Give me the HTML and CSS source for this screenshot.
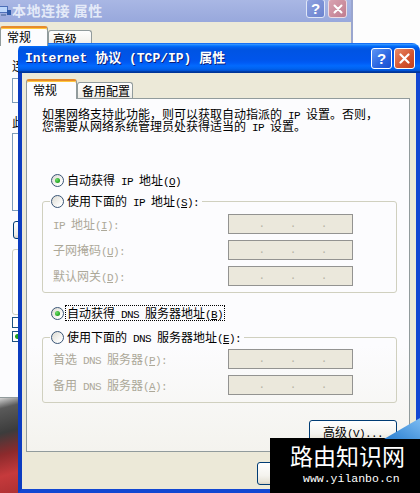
FILE: index.html
```html
<!DOCTYPE html>
<html lang="zh-CN">
<head>
<meta charset="utf-8">
<title>Internet 协议 (TCP/IP) 属性</title>
<link rel="stylesheet" href="styles.css">
</head>
<body>
<div class="wallpaper"></div>

<div class="bgwin">
  <div class="bg-title">
    <svg class="bg-icon" width="14" height="14" viewBox="0 0 14 14"><rect x="1" y="2" width="9" height="7" fill="#4d6fb8"/><rect x="2" y="3" width="7" height="5" fill="#bcd6fb"/><rect x="3" y="10" width="5" height="2" fill="#6f86b8"/><rect x="9" y="6" width="4" height="5" fill="#2e5aa8"/></svg>
    <span class="bg-title-text">本地连接 属性</span>
    <div class="bg-btns">
      <span class="tb-btn help inactive">?</span>
      <span class="tb-btn close inactive"><svg width="10" height="10" viewBox="0 0 10 10"><path d="M1.5 1.5 L8.5 8.5 M8.5 1.5 L1.5 8.5" stroke="#fff" stroke-width="2" stroke-linecap="round"/></svg></span>
    </div>
  </div>
  <div class="bg-body">
    <div class="tabs bg-tabs">
      <div class="tab active bg-tab-a">常规</div>
      <div class="tab bg-tab-b">高级</div>
    </div>
    <div class="bg-panel">
      <div class="bg-label">连接时使用:</div>
      <div class="bg-box bg-box-1"></div>
      <div class="bg-label bg-label-2">此连接使用下列项目(O):</div>
      <div class="bg-box bg-box-2"></div>
      <div class="bg-btn">安装(N)...</div>
      <div class="bg-box bg-box-3"></div>
      <div class="bg-check"></div>
      <div class="bg-check checked"></div>
    </div>
  </div>
</div>

<div class="win">
  <div class="titlebar">
    <span class="title-text">Internet 协议 (TCP/IP) 属性</span>
    <div class="tb-btns">
      <span class="tb-btn help">?</span>
      <span class="tb-btn close"><svg width="11" height="11" viewBox="0 0 11 11"><path d="M1.5 1.5 L9.5 9.5 M9.5 1.5 L1.5 9.5" stroke="#fff" stroke-width="2.2" stroke-linecap="round"/></svg></span>
    </div>
  </div>
  <div class="win-body">
    <div class="tabs">
      <div class="tab active tab-general">常规</div>
      <div class="tab tab-alt">备用配置</div>
    </div>
    <div class="panel">
      <p class="intro">如果网络支持此功能，则可以获取自动指派的<span class="l"> IP </span>设置。否则，<br>您需要从网络系统管理员处获得适当的<span class="l"> IP </span>设置。</p>

      <div class="radio-row r-auto-ip"><span class="radio checked"></span><span class="rtext">自动获得<span class="l"> IP </span>地址<span class="l">(<u>O</u>)</span></span></div>

      <fieldset class="group g-ip">
        <legend><span class="radio-row"><span class="radio"></span><span class="rtext">使用下面的<span class="l"> IP </span>地址<span class="l">(<u>S</u>):</span></span></span></legend>
        <div class="field-row"><span class="flabel"><span class="l">IP </span>地址<span class="l">(<u>I</u>):</span></span><span class="ipbox"><span>.</span><span>.</span><span>.</span></span></div>
        <div class="field-row"><span class="flabel">子网掩码<span class="l">(<u>U</u>):</span></span><span class="ipbox"><span>.</span><span>.</span><span>.</span></span></div>
        <div class="field-row"><span class="flabel">默认网关<span class="l">(<u>D</u>):</span></span><span class="ipbox"><span>.</span><span>.</span><span>.</span></span></div>
      </fieldset>

      <div class="radio-row r-auto-dns"><span class="radio checked"></span><span class="rtext focus">自动获得<span class="l"> DNS </span>服务器地址<span class="l">(<u>B</u>)</span></span></div>

      <fieldset class="group g-dns">
        <legend><span class="radio-row"><span class="radio"></span><span class="rtext">使用下面的<span class="l"> DNS </span>服务器地址<span class="l">(<u>E</u>):</span></span></span></legend>
        <div class="field-row"><span class="flabel">首选<span class="l"> DNS </span>服务器<span class="l">(<u>P</u>):</span></span><span class="ipbox"><span>.</span><span>.</span><span>.</span></span></div>
        <div class="field-row"><span class="flabel">备用<span class="l"> DNS </span>服务器<span class="l">(<u>A</u>):</span></span><span class="ipbox"><span>.</span><span>.</span><span>.</span></span></div>
      </fieldset>

      <div class="adv-row"><button class="xpbtn adv">高级<span class="l">(<u>V</u>)...</span></button></div>
    </div>
    <div class="btn-row">
      <button class="xpbtn ok">确定</button>
      <button class="xpbtn cancel">取消</button>
    </div>
  </div>
</div>

<div class="watermark">
  <svg class="wm-corner" width="36" height="21" viewBox="0 0 36 21"><defs><linearGradient id="wg" x1="0" y1="1" x2="1" y2="0"><stop offset="0" stop-color="#2a7fd0"/><stop offset="1" stop-color="#7dbcf2"/></linearGradient></defs><polygon points="0,21 36,0 36,21" fill="url(#wg)"/></svg>
  <div class="wm-title">路由知识网</div>
  <div class="wm-url">www.yilanbo.cn</div>
</div>
</body>
</html>
```

FILE: styles.css
```css
* { box-sizing: border-box; }
html, body { margin: 0; padding: 0; }
body {
  width: 420px;
  height: 493px;
  overflow: hidden;
  position: relative;
  background: #fdfdfd;
  font-family: "Noto Sans CJK SC", sans-serif;
  font-size: 12px;
  line-height: 14px;
  color: #000;
}
.l {
  font-family: "Liberation Mono", monospace;
  font-size: 11px;
  letter-spacing: -0.6px;
  line-height: 0;
}
u { text-decoration: underline; text-underline-offset: 1px; }

/* desktop */
.wallpaper {
  position: absolute;
  left: 0;
  top: 396px;
  width: 40px;
  height: 97px;
  background: linear-gradient(165deg, #e8e8e8 0, #5a5a5a 12%, #3c3c3c 35%, #8c2a2c 55%, #c63a3c 75%, #a82e30 100%);
}

/* background window */
.bgwin {
  position: absolute;
  left: -6px;
  top: 0;
  width: 359px;
  height: 398px;
  background: #ece9d8;
  border-right: 2px solid #9aa6cf;
  display: flex;
  flex-direction: column;
}
.bg-title {
  height: 22px;
  flex: none;
  background: linear-gradient(#a9b7e4, #98a8dc);
  display: flex;
  align-items: flex-start;
  padding: 0 4px 0 4px;
}
.bg-icon { margin-top: 4px; }
.bg-title-text {
  margin-top: 1px;
  color: #e4eaf8;
  font-weight: bold;
  font-size: 14px;
  line-height: 18px;
  letter-spacing: 0.5px;
}
.bg-btns {
  margin-left: auto;
  display: flex;
  gap: 3px;
  margin-top: -1px;
}
.tb-btn {
  width: 19px;
  height: 19px;
  border: 1px solid #fff;
  border-radius: 3px;
  display: flex;
  align-items: center;
  justify-content: center;
  color: #fff;
  font-family: "Liberation Sans", sans-serif;
  font-weight: bold;
  font-size: 15px;
  line-height: 1;
}
.tb-btn.help.inactive { background: linear-gradient(135deg, #8fa2df, #6a82cf); border-color: #dfe6f7; }
.tb-btn.close.inactive { background: linear-gradient(135deg, #d9a3b1, #c07c8f); border-color: #ecdce3; }

.bg-body {
  flex: 1;
  display: flex;
  flex-direction: column;
  padding: 4px 0 0 6px;
}
.bg-panel {
  flex: 1;
  background: #fcfcfe;
  border: 1px solid #919b9c;
  border-left: none;
  padding: 13px 0 0 12px;
}
.bg-label { height: 14px; line-height: 14px; white-space: nowrap; }
.bg-label-2 { margin-top: 12px; }
.bg-box { border: 1px solid #7f9db9; background: #fff; width: 320px; }
.bg-box-1 { margin-top: 5px; height: 25px; }
.bg-box-2 { margin-top: 4px; height: 78px; }
.bg-box-3 { margin-top: 10px; height: 66px; border-color: #d0d0bf; border-radius: 3px; }
.bg-btn {
  margin-top: 10px;
  margin-left: 1px;
  width: 80px;
  height: 18px;
  border: 1px solid #003c74;
  border-radius: 3px;
  background: linear-gradient(#fff, #ecebe6 80%, #d6d0c5);
  font-size: 12px;
  line-height: 16px;
  text-align: center;
}
.bg-check {
  margin-top: 2px;
  width: 11px;
  height: 11px;
  border: 1px solid #1c5180;
  background: #fff;
}
.bg-check.checked { margin-top: 3px; background: radial-gradient(circle, #21a121 0 2px, #fff 3px); }

/* front window */
.win {
  position: absolute;
  left: 18px;
  top: 43px;
  width: 402px;
  display: flex;
  flex-direction: column;
}
.titlebar {
  height: 30px;
  border-radius: 8px 8px 0 0;
  background: linear-gradient(to bottom, #0058ee 0%, #3593ff 4%, #288eff 6%, #127dff 8%, #036ffc 10%, #0262ee 14%, #0057e5 20%, #0054e3 24%, #0055eb 56%, #005bf5 66%, #026afe 76%, #0062ef 86%, #0052d6 92%, #0040ab 94%, #003092 100%);
  display: flex;
  align-items: center;
  padding: 0 5px 0 7px;
}
.title-text {
  color: #fff;
  font-family: "Liberation Mono", "Noto Sans CJK SC", monospace;
  font-weight: bold;
  font-size: 13px;
  line-height: 16px;
  text-shadow: 1px 1px #0a1f7a;
  margin-top: 1px;
}
.tb-btns {
  margin-left: auto;
  display: flex;
  gap: 2px;
}
.win .tb-btn { width: 21px; height: 21px; }
.tb-btn.help { background: linear-gradient(135deg, #5b95f5, #2a64e0 60%, #1a4fd0); }
.tb-btn.close { background: linear-gradient(135deg, #e98a66, #d3532f 60%, #c13f22); }

.win-body {
  background: #ece9d8;
  border: 4px solid #1247d2;
  border-top: none;
  border-left-color: #0c3cc0;
  padding: 6px 6px 4px 4px;
  display: flex;
  flex-direction: column;
}

/* tabs */
.tabs {
  display: flex;
  align-items: flex-end;
  height: 19px;
}
.tab {
  height: 16px;
  border: 1px solid #919b9c;
  border-bottom: none;
  border-radius: 3px 3px 0 0;
  background: linear-gradient(#fefefe, #f6f5f1 60%, #ecebe6);
  font-size: 12px;
  line-height: 14px;
  padding: 1px 0 0 4px;
  white-space: nowrap;
}
.tab.active {
  height: 20px;
  margin-bottom: -1px;
  position: relative;
  z-index: 1;
  background: #fcfcfe;
  border-top: 2px solid #e68b2c;
  box-shadow: inset 0 1px #ffc73c;
  padding: 2px 0 0 6px;
}
.tab-general { width: 51px; }
.tab-alt { width: 56px; }
.bg-tabs { height: 19px; }
.bg-tab-a { width: 48px; padding-left: 5px; }
.bg-tab-b { width: 44px; padding-left: 4px; height: 15px; }

/* panel */
.panel {
  background: linear-gradient(#fcfcfe 70%, #f4f3ee);
  border: 1px solid #919b9c;
  padding: 9px 12px 8px 15px;
  display: flex;
  flex-direction: column;
}
.intro {
  margin: 0;
  line-height: 12px;
  height: 24px;
  white-space: nowrap;
}
.radio-row {
  display: flex;
  align-items: center;
  gap: 3px;
  height: 16px;
  white-space: nowrap;
}
.r-auto-ip { margin: 40px 0 0 9px; }
.r-auto-dns { margin: 12px 0 0 9px; }
.radio {
  width: 13px;
  height: 13px;
  flex: none;
  border-radius: 50%;
  border: 1px solid #3a5576;
  background: linear-gradient(135deg, #dcdad2, #fefefe 80%);
  display: flex;
  align-items: center;
  justify-content: center;
}
.radio.checked::after {
  content: "";
  width: 5px;
  height: 5px;
  border-radius: 50%;
  background: radial-gradient(circle at 35% 35%, #6fe06b, #21a121 70%);
}
.rtext { line-height: 14px; padding: 0 1px; margin-left: -1px; }
.rtext.focus { outline: 1px dotted #000; outline-offset: 0; }

.group {
  margin: 5px 0 0;
  padding: 5px 0 6px 7px;
  border: 1px solid #d0d0bf;
  border-radius: 3px;
  min-width: 0;
  display: flex;
  flex-direction: column;
  gap: 6px;
}
.g-dns { margin-top: 8px; padding-top: 4px; padding-bottom: 7px; }
.group legend {
  padding: 0 2px 0 1px;
  height: 16px;
}
.field-row {
  display: grid;
  grid-template-columns: 175px 125px;
  align-items: center;
  height: 20px;
  padding-left: 3px;
}
.flabel { color: #aca899; white-space: nowrap; }
.ipbox {
  height: 20px;
  border: 1px solid #939391;
  background: #ebe8dc;
  display: flex;
  justify-content: space-evenly;
  align-items: flex-end;
  padding: 0 0 3px 5px;
  color: #b6b3a6;
  font-family: "Liberation Mono", monospace;
  font-size: 11px;
  line-height: 11px;
}

/* buttons */
.adv-row {
  display: flex;
  justify-content: flex-end;
  margin-top: 17px;
}
.xpbtn {
  height: 23px;
  border: 1px solid #003c74;
  border-radius: 3px;
  background: linear-gradient(#ffffff, #f4f3ee 60%, #e6e3d8 90%, #d6d0c5);
  font-family: "Noto Sans CJK SC", sans-serif;
  font-size: 12px;
  line-height: 14px;
  color: #000;
  padding: 0;
}
.adv { width: 88px; }
.btn-row {
  display: flex;
  justify-content: flex-end;
  gap: 5px;
  margin-top: 10px;
}
.ok, .cancel { width: 74px; }

/* watermark overlay */
.watermark {
  position: absolute;
  left: 270px;
  top: 438px;
  width: 150px;
  height: 55px;
  background: #000;
  color: #fff;
  padding: 5px 0 0 20px;
}
.wm-corner {
  position: absolute;
  right: 0;
  top: -20px;
}
.wm-title {
  font-family: "Noto Sans CJK SC", sans-serif;
  font-size: 23px;
  line-height: 24px;
}
.wm-url {
  margin: 6px 0 0 13px;
  font-family: "Liberation Mono", monospace;
  font-size: 11.5px;
  line-height: 12px;
}
```
